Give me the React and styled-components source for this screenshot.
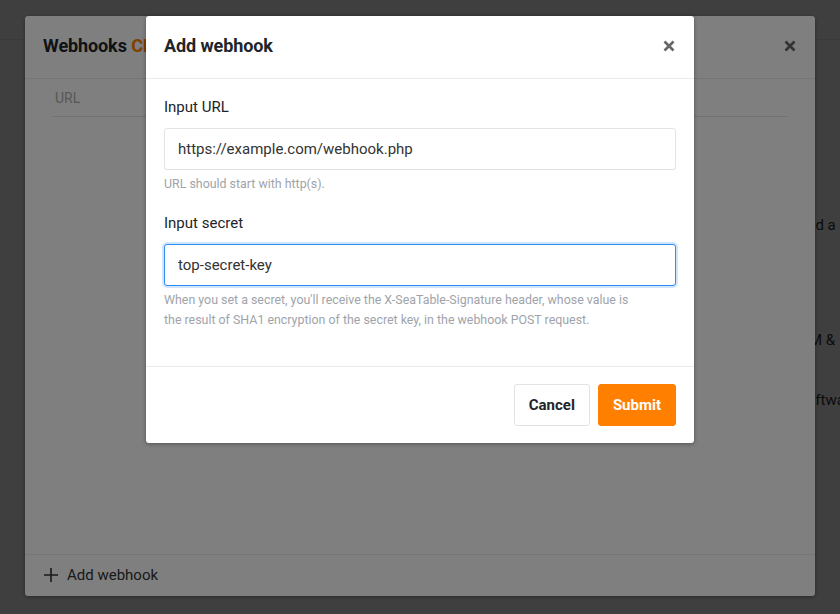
import React from "react";
import styled, { createGlobalStyle } from "styled-components";

const Global = createGlobalStyle`
  html, body { margin: 0; padding: 0; }
  body {
    font-family: Roboto, "Liberation Sans", Arial, sans-serif;
    background: #fff;
    color: #333;
    width: 840px;
    height: 614px;
    overflow: hidden;
  }
  * { box-sizing: border-box; }
`;

const Page = styled.div`
  position: relative;
  width: 840px;
  height: 614px;
  overflow: hidden;
  background: #fff;
`;

const TopBar = styled.header`
  height: 40px;
  border-bottom: 1px solid #e8e8e8;
`;

const PageBody = styled.main`
  display: grid;
  grid-template-columns: 799px 1fr;
  overflow: hidden;
`;

const SideColumn = styled.section`
  grid-column: 2;
  padding-top: 174px;
  font-size: 15px;
  line-height: 22px;
  color: #333;
  white-space: nowrap;
  overflow: hidden;
`;

const SideLine = styled.p`
  margin: 0 0 ${(p) => p.$gap || 0}px ${(p) => p.$indent || 0}px;
`;

const Overlay = styled.div`
  position: absolute;
  inset: 0;
  background: rgba(0, 0, 0, 0.5);
`;

const Dialog = styled.div`
  position: absolute;
  top: 16px;
  left: ${(p) => p.$left}px;
  width: ${(p) => p.$width}px;
  height: ${(p) => (p.$height ? `${p.$height}px` : "auto")};
  background: #fff;
  border-radius: 3px;
  box-shadow: 0 1px 4px rgba(0, 0, 0, 0.35);
  display: flex;
  flex-direction: column;
`;

const DialogHeader = styled.div`
  height: 63px;
  flex: none;
  display: flex;
  align-items: center;
  justify-content: space-between;
  padding: 0 18px 3px;
  border-bottom: 1px solid #e9ecef;
`;

const Title = styled.h2`
  margin: 0;
  font-size: 18px;
  font-weight: 700;
  color: #212529;
  letter-spacing: -0.1px;
`;

const Accent = styled.span`
  color: #ff8000;
`;

const CloseButton = styled.button`
  border: 0;
  background: transparent;
  padding: 0;
  width: 14px;
  height: 14px;
  display: flex;
  align-items: center;
  justify-content: center;
  color: #666;
  cursor: pointer;
`;

const TableArea = styled.div`
  flex: 1;
  padding: 0 27px;
`;

const TableHead = styled.div`
  height: 38px;
  display: flex;
  align-items: center;
  padding-left: 3px;
  border-bottom: 1px solid #e5e5e5;
  font-size: 14px;
  color: #b0b0b0;
`;

const DialogFooterLeft = styled.div`
  height: 42px;
  flex: none;
  border-top: 1px solid #e9ecef;
  display: flex;
  align-items: center;
  gap: 8px;
  padding: 0 18px 2px;
  font-size: 15px;
  color: #333;
`;

const Body = styled.div`
  padding: 17px 18px 36px;
  display: flex;
  flex-direction: column;
`;

const Field = styled.div`
  display: flex;
  flex-direction: column;
  margin-bottom: ${(p) => p.$mb || 0}px;
`;

const Label = styled.label`
  font-size: 15px;
  line-height: 22px;
  color: #212529;
  margin-bottom: 10px;
`;

const Input = styled.input`
  height: 42px;
  width: 100%;
  border: 1px solid ${(p) => (p.$focused ? "#2d8cf0" : "#e3e3e3")};
  border-radius: 3px;
  padding: 0 13px;
  font-family: inherit;
  font-size: 15px;
  color: #333;
  outline: none;
  box-shadow: ${(p) => (p.$focused ? "0 0 0 2px rgba(45, 140, 240, 0.22)" : "none")};
  background: #fff;
`;

const Help = styled.small`
  display: block;
  max-width: 480px;
  margin-top: 4px;
  font-size: 12.4px;
  line-height: 20px;
  color: #a0a4aa;
`;

const Footer = styled.div`
  border-top: 1px solid #e9ecef;
  padding: 17px 18px;
  display: flex;
  justify-content: flex-end;
  gap: 8px;
`;

const Button = styled.button`
  height: 42px;
  padding: 0 14px;
  border-radius: 3px;
  font-family: inherit;
  font-size: 15px;
  font-weight: 700;
  cursor: pointer;
  border: 1px solid ${(p) => (p.$primary ? "#ff8000" : "#e3e3e3")};
  background: ${(p) => (p.$primary ? "#ff8000" : "#fff")};
  color: ${(p) => (p.$primary ? "#fff" : "#212529")};
`;

const XIcon = ({ size = 12 }) => (
  <svg width={size} height={size} viewBox="0 0 12 12" aria-hidden="true">
    <path d="M1.5 1.5 L10.5 10.5 M10.5 1.5 L1.5 10.5" stroke="currentColor" strokeWidth="2.6" strokeLinecap="butt" />
  </svg>
);

const PlusIcon = () => (
  <svg width="16" height="16" viewBox="0 0 16 16" aria-hidden="true">
    <path d="M8 1 V15 M1 8 H15" stroke="currentColor" strokeWidth="1.6" />
  </svg>
);

export default function App() {
  return (
    <>
      <Global />
      <Page>
        <TopBar />
        <PageBody>
          <SideColumn>
            <SideLine $gap={93}>and a</SideLine>
            <SideLine $gap={38} $indent={-9}>CRM &amp;</SideLine>
            <SideLine>softwa</SideLine>
          </SideColumn>
        </PageBody>

        <Overlay />
        <Dialog $left={25} $width={790} $height={580}>
          <DialogHeader>
            <Title>
              Webhooks <Accent>CRM</Accent>
            </Title>
            <CloseButton aria-label="Close">
              <XIcon />
            </CloseButton>
          </DialogHeader>
          <TableArea>
            <TableHead>URL</TableHead>
          </TableArea>
          <DialogFooterLeft>
            <PlusIcon />
            <span>Add webhook</span>
          </DialogFooterLeft>
        </Dialog>

        <Overlay />
        <Dialog $left={146} $width={548}>
          <DialogHeader>
            <Title>Add webhook</Title>
            <CloseButton aria-label="Close">
              <XIcon />
            </CloseButton>
          </DialogHeader>
          <Body>
            <Field $mb={18}>
              <Label>Input URL</Label>
              <Input defaultValue="https://example.com/webhook.php" />
              <Help>URL should start with http(s).</Help>
            </Field>
            <Field>
              <Label>Input secret</Label>
              <Input $focused defaultValue="top-secret-key" />
              <Help>
                When you set a secret, you'll receive the X-SeaTable-Signature header, whose value is
                the result of SHA1 encryption of the secret key, in the webhook POST request.
              </Help>
            </Field>
          </Body>
          <Footer>
            <Button>Cancel</Button>
            <Button $primary>Submit</Button>
          </Footer>
        </Dialog>
      </Page>
    </>
  );
}
